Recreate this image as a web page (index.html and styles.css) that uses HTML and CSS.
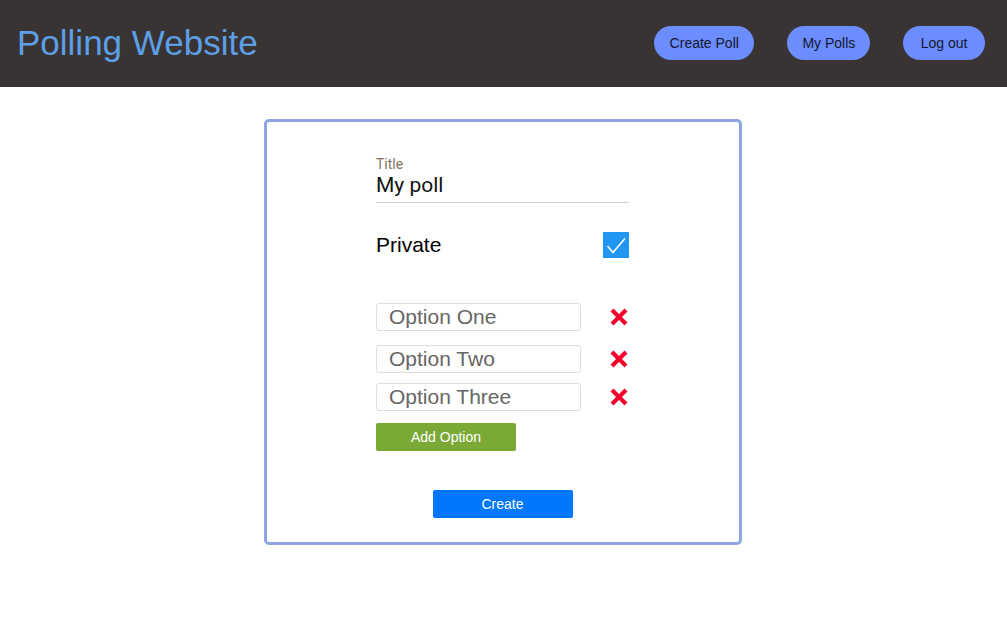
FILE: index.html
```html
<!DOCTYPE html>
<html>
<head>
<meta charset="utf-8">
<title>Polling Website</title>
<link rel="stylesheet" href="styles.css">
</head>
<body>
<header class="topbar">
  <div class="brand">Polling Website</div>
  <nav class="nav">
    <button class="nav-btn create-poll">Create Poll</button>
    <button class="nav-btn">My Polls</button>
    <button class="nav-btn logout">Log out</button>
  </nav>
</header>
<main class="main">
  <section class="card">
    <div class="form">
      <div class="title-field">
        <div class="field-label">Title</div>
        <div class="field-input">My poll</div>
      </div>
      <div class="private-row">
        <span class="private-label">Private</span>
        <span class="checkbox">
          <svg width="26" height="26" viewBox="0 0 26 26"><polyline points="4.5,14 10,20.5 22,6.5" fill="none" stroke="#fff" stroke-width="1.6"/></svg>
        </span>
      </div>
      <div class="options">
        <div class="option-row first">
          <div class="option-input">Option One</div>
          <svg class="remove" width="20" height="20" viewBox="0 0 20 20"><path d="M3 3L17 17M17 3L3 17" stroke="#f4002c" stroke-width="4.2"/></svg>
        </div>
        <div class="option-row second">
          <div class="option-input">Option Two</div>
          <svg class="remove" width="20" height="20" viewBox="0 0 20 20"><path d="M3 3L17 17M17 3L3 17" stroke="#f4002c" stroke-width="4.2"/></svg>
        </div>
        <div class="option-row third">
          <div class="option-input">Option Three</div>
          <svg class="remove" width="20" height="20" viewBox="0 0 20 20"><path d="M3 3L17 17M17 3L3 17" stroke="#f4002c" stroke-width="4.2"/></svg>
        </div>
      </div>
      <button class="btn add-btn">Add Option</button>
      <div class="create-wrap">
        <button class="btn create-btn">Create</button>
      </div>
    </div>
  </section>
</main>
</body>
</html>
```
FILE: styles.css
```css
* { box-sizing: border-box; }
html, body { margin: 0; padding: 0; background: #fff; }
body { font-family: "Liberation Sans", Arial, sans-serif; }

.topbar {
  height: 87px;
  background: #393333;
  display: flex;
  align-items: center;
  justify-content: space-between;
  padding: 0 22px 0 17px;
}
.brand {
  color: #5b9fe6;
  font-size: 35px;
  line-height: 40px;
  margin-top: -2px;
}
.nav { display: flex; gap: 33px; margin-top: -2px; }
.nav-btn {
  height: 34px;
  border: none;
  border-radius: 17px;
  background: #6b8dff;
  color: #161630;
  font-family: "Liberation Sans", Arial, sans-serif;
  font-size: 14px;
  padding: 0 15px;
  cursor: pointer;
}
.nav-btn.create-poll { padding: 0 15.5px; }
.nav-btn.logout { padding: 0 17.5px; }

.main { display: flex; justify-content: center; padding-top: 32px; padding-right: 1px; }
.card {
  width: 478px;
  height: 426px;
  border: 3px solid #8fa7e1;
  border-radius: 5px;
  padding-left: 109px;
}
.form { width: 253px; padding-top: 34px; }

.field-label {
  font-family: Roboto, "Liberation Sans", sans-serif;
  font-size: 14px;
  line-height: 16px;
  color: #85735f;
}
.field-input {
  font-family: Roboto, "Liberation Sans", sans-serif;
  font-size: 21px;
  line-height: 26px;
  height: 31px;
  color: #111;
  border-bottom: 1px solid #d2d2d2;
}

.private-row {
  margin-top: 29px;
  height: 26px;
  display: flex;
  align-items: center;
  justify-content: space-between;
}
.private-label { font-size: 21px; color: #000; }
.checkbox {
  width: 26px;
  height: 26px;
  background: #2196f3;
  display: block;
}
.checkbox svg { display: block; }

.options { margin-top: 45px; }
.option-row {
  display: flex;
  align-items: center;
  justify-content: space-between;
  height: 28px;
}
.option-row.second { margin-top: 14px; }
.option-row.third { margin-top: 10px; }
.option-input {
  width: 205px;
  height: 28px;
  border: 1px solid #dedede;
  border-radius: 3px;
  padding-left: 12px;
  font-size: 21px;
  line-height: 26px;
  color: #666;
}
.remove { display: block; }

.btn {
  width: 140px;
  height: 28px;
  border: none;
  border-radius: 2px;
  color: #fff;
  font-family: "Liberation Sans", Arial, sans-serif;
  font-size: 14px;
  display: block;
  cursor: pointer;
}
.add-btn { margin-top: 12px; background: #7ba936; }
.create-wrap { display: flex; justify-content: center; margin-top: 39px; }
.create-btn { background: #0077ff; }
```
